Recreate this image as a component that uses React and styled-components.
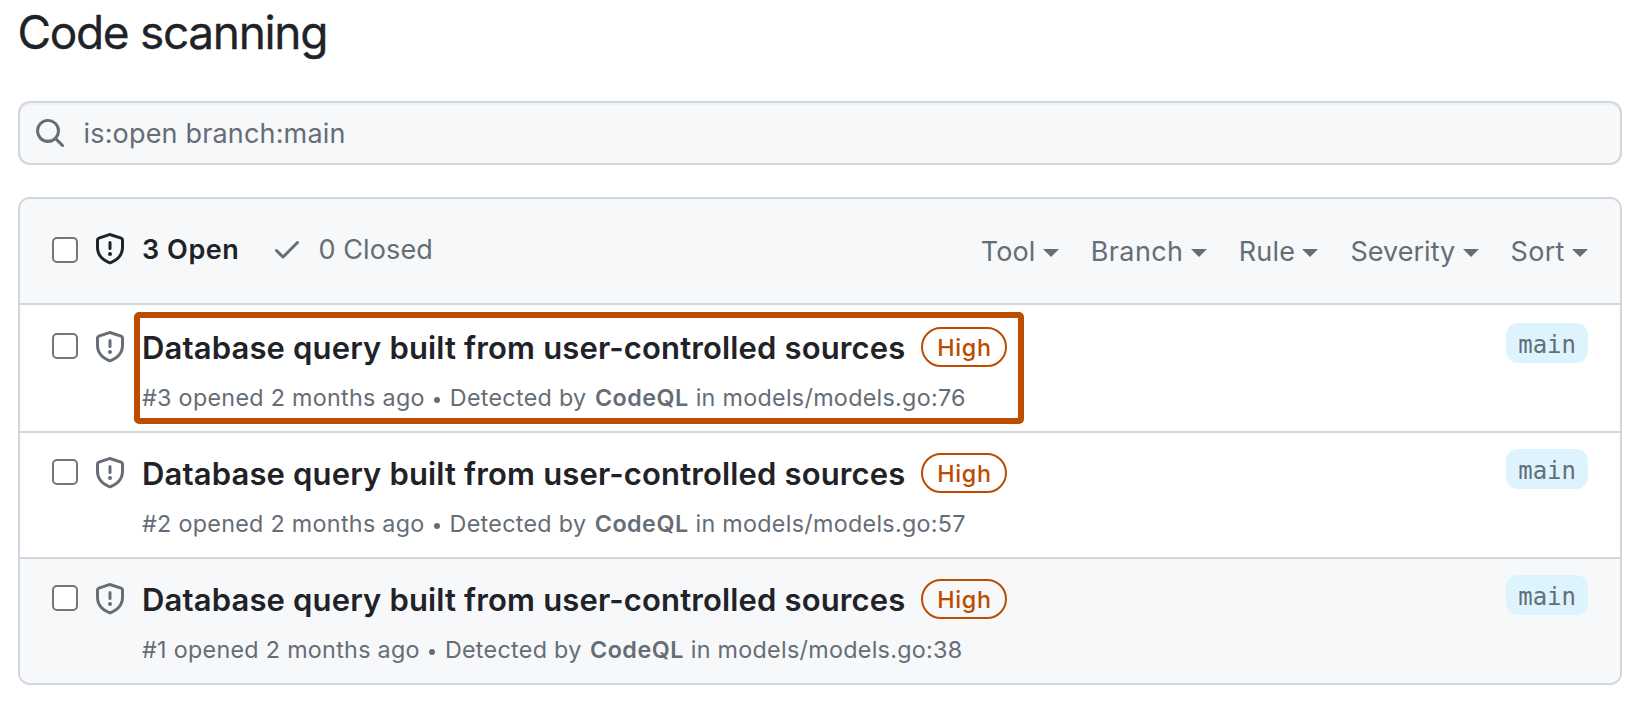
import React from 'react';
import styled, { createGlobalStyle, css } from 'styled-components';

const color = {
  text: '#1f2328',
  muted: '#656d76',
  border: '#d0d7de',
  subtle: '#f6f8fa',
  orange: '#bc4c00',
  tag: '#ddf4ff',
};

const GlobalStyle = createGlobalStyle`
  *, *::before, *::after { box-sizing: border-box; }
  body {
    margin: 0;
    background: #fff;
    color: ${color.text};
    font-family: Inter, "Liberation Sans", sans-serif;
  }
`;

const Page = styled.main`
  width: 1636px;
  height: 704px;
  padding: 4px 14px 0 18px;
  overflow: hidden;
`;

const PageTitle = styled.h1`
  margin: 0 0 41px -0.5px;
  font-size: 46px;
  font-weight: 400;
  line-height: 56px;
  letter-spacing: -1.33px;
  -webkit-text-stroke: 0.3px currentColor;
`;

const SearchBox = styled.div`
  display: flex;
  align-items: center;
  gap: 17.5px;
  height: 64px;
  padding: 0 14px;
  border: 2px solid ${color.border};
  border-radius: 12px;
  background: ${color.subtle};
  box-shadow: inset 0 2px 0 rgba(208, 215, 222, 0.2);
  color: ${color.muted};
`;

const SearchText = styled.span`
  padding-top: 2px;
  font-size: 27px;
  line-height: 32px;
  letter-spacing: 0.17px;
`;

const Svg = styled.svg`
  display: block;
  flex: none;
  width: 32px;
  height: 32px;
  fill: currentColor;
`;

const AlertList = styled.section`
  margin-top: 32px;
  border: 2px solid ${color.border};
  border-radius: 12px;
  overflow: hidden;
`;

const ListHeader = styled.header`
  display: flex;
  align-items: center;
  justify-content: space-between;
  height: 106px;
  padding: 0 32px;
  border-bottom: 2px solid ${color.border};
  background: ${color.subtle};
`;

const States = styled.div`
  display: flex;
  align-items: center;
  padding-bottom: 4px;
`;

const Checkbox = styled.input.attrs({ type: 'checkbox' })`
  appearance: none;
  flex: none;
  width: 26px;
  height: 26px;
  margin: ${(p) => (p.$offset ? `${p.$offset}px` : 0)} 16px 0 0;
  border: 2px solid #767676;
  border-radius: 5px;
  background: #fff;
`;

const StateLink = styled.a`
  display: flex;
  align-items: center;
  gap: ${(p) => (p.$selected ? 16 : 15.5)}px;
  margin-right: 31.5px;
  color: ${(p) => (p.$selected ? color.text : color.muted)};
  font-size: 27px;
  font-weight: ${(p) => (p.$selected ? 600 : 400)};
  line-height: 32px;
  letter-spacing: ${(p) => (p.$selected ? 0.55 : 0.13)}px;
`;

const StateLabel = styled.span`
  margin: 1px 0 -1px;
`;

const Filters = styled.nav`
  display: flex;
  align-items: center;
  gap: 32px;
  padding-top: 2px;
`;

const Filter = styled.button`
  display: flex;
  align-items: center;
  padding: 0;
  border: 0;
  background: none;
  color: ${color.muted};
  font: 400 27px/32px Inter, "Liberation Sans", sans-serif;
  letter-spacing: ${(p) => p.$tracking}px;

  &::after {
    content: '';
    margin: 2px 0 0 7.3px;
    border: 8px solid transparent;
    border-top-color: currentColor;
    border-bottom-width: 0;
  }
`;

const Row = styled.article`
  display: flex;
  align-items: flex-start;
  height: 126px;
  padding: 0 32px;
  border-top: 2px solid ${(p) => (p.$first ? 'transparent' : color.border)};
  background: ${(p) => (p.$shaded ? color.subtle : '#fff')};
`;

const RowIcon = styled.span`
  margin: 24px 16px 0 0;
  color: ${color.muted};
`;

const Alert = styled.div`
  position: relative;
  margin-top: 20px;

  ${(p) =>
    p.$highlighted &&
    css`
      &::after {
        content: '';
        position: absolute;
        inset: -15px -17px -10px -8px;
        border: 6px solid ${color.orange};
        border-radius: 5px;
      }
    `}
`;

const AlertHeading = styled.div`
  display: flex;
  align-items: center;
  gap: 15.4px;
  height: 40px;
`;

const AlertTitle = styled.a`
  padding-top: 1px;
  font-size: 31px;
  font-weight: 600;
  line-height: 40px;
  letter-spacing: 0.15px;
  white-space: nowrap;
`;

const Severity = styled.span`
  width: 86px;
  height: 40px;
  padding-left: 1px;
  border: 2px solid ${color.orange};
  border-radius: 20px;
  color: ${color.orange};
  font-size: 23.3px;
  font-weight: 500;
  line-height: 38px;
  letter-spacing: 0.7px;
  text-align: center;
`;

const Meta = styled.p`
  margin: 15px 0 0;
  color: ${color.muted};
  font-size: 23.3px;
  line-height: 32px;
  letter-spacing: 0.3px;
  white-space: nowrap;
`;

const Tool = styled.b`
  margin: 0 0 0 1.6px;
  font-weight: 600;
  letter-spacing: 0.5px;
`;

const Dot = styled.span`
  display: inline-block;
  width: 6px;
  height: 6px;
  margin: 0 9.5px;
  border-radius: 50%;
  background: currentColor;
  vertical-align: 3px;
`;

const BranchTag = styled.span`
  height: 40px;
  margin: 16px 0 0 auto;
  padding: 0 12px;
  border-radius: 12px;
  background: ${color.tag};
  color: ${color.muted};
  font: 24px/44px "DejaVu Sans Mono", monospace;
`;

const SearchIcon = () => (
  <Svg viewBox="0 0 16 16">
    <path d="M10.68 11.74a6 6 0 0 1-7.922-8.982 6 6 0 0 1 8.982 7.922l3.04 3.04a.749.749 0 0 1-.326 1.275.749.749 0 0 1-.734-.215ZM11.5 7a4.499 4.499 0 1 0-8.997 0A4.499 4.499 0 0 0 11.5 7Z" />
  </Svg>
);

const ShieldIcon = () => (
  <Svg viewBox="0 0 16 16">
    <path d="M7.467.133a1.748 1.748 0 0 1 1.066 0l5.25 1.68A1.75 1.75 0 0 1 15 3.48V7c0 1.566-.32 3.182-1.303 4.682-.983 1.498-2.585 2.813-5.032 3.855a1.697 1.697 0 0 1-1.33 0c-2.447-1.042-4.049-2.357-5.032-3.855C1.32 10.182 1 8.566 1 7V3.48a1.755 1.755 0 0 1 1.217-1.667Zm.61 1.429a.25.25 0 0 0-.153 0l-5.25 1.68a.25.25 0 0 0-.174.238V7c0 1.358.275 2.666 1.057 3.86.784 1.194 2.121 2.34 4.366 3.297a.196.196 0 0 0 .154 0c2.245-.956 3.582-2.104 4.366-3.298C13.225 9.666 13.5 8.36 13.5 7V3.48a.251.251 0 0 0-.174-.237l-5.25-1.68ZM8.75 4.75v3a.75.75 0 0 1-1.5 0v-3a.75.75 0 0 1 1.5 0ZM9 10.5a1 1 0 1 1-2 0 1 1 0 0 1 2 0Z" />
  </Svg>
);

const CheckIcon = () => (
  <Svg viewBox="0 0 16 16">
    <path d="M13.78 4.22a.75.75 0 0 1 0 1.06l-7.25 7.25a.75.75 0 0 1-1.06 0L2.22 9.28a.751.751 0 0 1 .018-1.042.751.751 0 0 1 1.042-.018L6 10.94l6.72-6.72a.75.75 0 0 1 1.06 0Z" />
  </Svg>
);

const filters = [
  { name: 'Tool', tracking: 0.1 },
  { name: 'Branch', tracking: 0.4 },
  { name: 'Rule', tracking: 0.2 },
  { name: 'Severity', tracking: 0.03 },
  { name: 'Sort', tracking: 0.3 },
];

const alerts = [
  { id: 3, line: 76, highlighted: true },
  { id: 2, line: 57 },
  { id: 1, line: 38, shaded: true },
];

export default function App() {
  return (
    <>
      <GlobalStyle />
      <Page>
        <PageTitle>Code scanning</PageTitle>
        <SearchBox>
          <SearchIcon />
          <SearchText>is:open branch:main</SearchText>
        </SearchBox>
        <AlertList>
          <ListHeader>
            <States>
              <Checkbox $offset={2} />
              <StateLink $selected>
                <ShieldIcon />
                <StateLabel>3 Open</StateLabel>
              </StateLink>
              <StateLink>
                <CheckIcon />
                <StateLabel>0 Closed</StateLabel>
              </StateLink>
            </States>
            <Filters>
              {filters.map((f) => (
                <Filter key={f.name} $tracking={f.tracking}>
                  {f.name}
                </Filter>
              ))}
            </Filters>
          </ListHeader>
          {alerts.map((a, i) => (
            <Row key={a.id} $first={i === 0} $shaded={a.shaded}>
              <Checkbox $offset={26} />
              <RowIcon>
                <ShieldIcon />
              </RowIcon>
              <Alert $highlighted={a.highlighted}>
                <AlertHeading>
                  <AlertTitle>Database query built from user-controlled sources</AlertTitle>
                  <Severity>High</Severity>
                </AlertHeading>
                <Meta>
                  #{a.id} opened 2 months ago
                  <Dot />
                  Detected by <Tool>CodeQL</Tool> in models/models.go:{a.line}
                </Meta>
              </Alert>
              <BranchTag>main</BranchTag>
            </Row>
          ))}
        </AlertList>
      </Page>
    </>
  );
}
